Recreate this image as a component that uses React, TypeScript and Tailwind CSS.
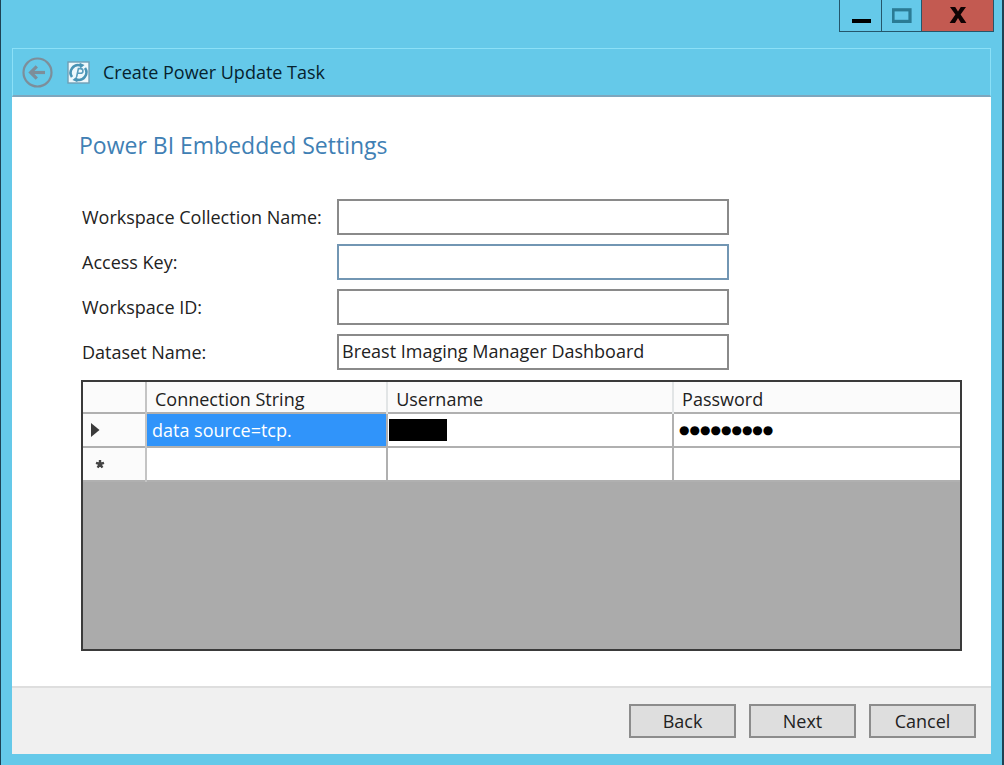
import React from "react";

type Field = { id: string; label: string; value: string; border: string };

const fields: Field[] = [
  { id: "collection", label: "Workspace Collection Name:", value: "", border: "border-[#8a8a8a]" },
  { id: "key", label: "Access Key:", value: "", border: "border-[#7296b3]" },
  { id: "workspace", label: "Workspace ID:", value: "", border: "border-[#8a8a8a]" },
  { id: "dataset", label: "Dataset Name:", value: "Breast Imaging Manager Dashboard", border: "border-[#8a8a8a]" },
];

function WindowControls() {
  return (
    <div className="mr-[7px] flex h-8 border-x border-b border-[#24566b]">
      <button aria-label="Minimize" className="flex w-[42px] items-center justify-center border-r border-[#24566b]">
        <svg width="20" height="20" viewBox="0 0 20 20">
          <rect x="1" y="13" width="19" height="4" fill="#000" />
        </svg>
      </button>
      <button aria-label="Maximize" className="flex w-10 items-center justify-center border-r border-[#24566b]">
        <svg width="20" height="16" viewBox="0 0 20 16">
          <rect x="1" y="1.8" width="17" height="11.6" fill="none" stroke="#2b7b94" strokeWidth="3.2" />
        </svg>
      </button>
      <button aria-label="Close" className="flex w-[71px] items-center justify-center bg-[#c35a51]">
        <svg width="18" height="18" viewBox="0 0 18 18">
          <path d="M1 0h5.2L9 4.6 11.8 0H17l-5.4 7.6L17.4 16H12L9 11 6 16H.6l5.8-8.4z" fill="#100304" />
        </svg>
      </button>
    </div>
  );
}

function BackArrow() {
  return (
    <svg width="31" height="31" viewBox="0 0 31 31" fill="none" stroke="#7d8e9a">
      <circle cx="15.5" cy="15.5" r="14" strokeWidth="2.2" />
      <path d="M8.5 15.5H23" strokeWidth="3.2" />
      <path d="M14.8 9.3l-6.2 6.2 6.2 6.2" strokeWidth="3.2" />
    </svg>
  );
}

function AppIcon() {
  return (
    <svg width="23" height="23" viewBox="0 0 23 23" fill="none">
      <rect x="1" y="1" width="21" height="21" fill="#eef8fc" stroke="#6f9fb5" strokeWidth="1.4" />
      <path d="M5 16A7.6 7.6 0 0 1 13.5 4.4" stroke="#4a94b5" strokeWidth="2.6" />
      <path d="M18 7A7.6 7.6 0 0 1 9.5 18.6" stroke="#4a94b5" strokeWidth="2.6" />
      <path d="M12.5 1.8l5 2.2-4.2 3.4zM10.5 21.2l-5-2.2 4.2-3.4z" fill="#4a94b5" />
      <path d="M9.6 16l1.8-8.4h2.2a2.3 2.3 0 0 1 0 4.7h-2.8" stroke="#5a9dbd" strokeWidth="1.6" />
    </svg>
  );
}

function ConnectionGrid() {
  return (
    <div className="min-h-[271px] flex-1 border-2 border-[#3a3a3a] bg-[#ababab]">
      <table className="w-full table-fixed border-collapse text-left">
        <colgroup>
          <col className="w-[63px]" />
          <col className="w-[27.5%]" />
          <col className="w-[32.6%]" />
          <col />
        </colgroup>
        <thead>
          <tr className="h-[31px] border-b-2 border-[#b0b0b0] bg-[#fbfbfb]">
            <th className="border-r-2 border-[#c4c4c4]" aria-label="Row" />
            <th className="border-r-2 border-[#e2e5e6] pt-1 pl-2 font-normal">Connection String</th>
            <th className="border-r-2 border-[#e2e5e6] pt-1 pl-2 font-normal">Username</th>
            <th className="pt-1 pl-2 font-normal">Password</th>
          </tr>
        </thead>
        <tbody>
          <tr className="h-[34px] border-b-2 border-[#b0b0b0] bg-white">
            <td className="border-r-2 border-[#c4c4c4] bg-[#fbfbfb] pl-2">
              <svg width="9" height="16" viewBox="0 0 9 16">
                <path d="M0 1l8.5 7L0 15z" fill="#3b3b3b" />
              </svg>
            </td>
            <td className="border-r-2 border-[#b0b0b0] bg-[#3094fa] pl-[5px] text-white">data source=tcp.</td>
            <td className="border-r-2 border-[#b0b0b0] pl-px">
              <span className="block h-[22px] w-[58px] bg-black" />
            </td>
            <td className="pl-[5px] font-['DejaVu_Sans',sans-serif] text-[12px] text-black">●●●●●●●●●</td>
          </tr>
          <tr className="h-[34px] border-b-2 border-[#b0b0b0] bg-white">
            <td className="border-r-2 border-[#c4c4c4] bg-[#fbfbfb] pl-3">
              <svg width="10" height="10" viewBox="0 0 10 10" stroke="#444" strokeWidth="2.4">
                <path d="M5 1V5M1 3.8L5 5M9 3.8L5 5M2.6 8.6L5 5M7.4 8.6L5 5" />
              </svg>
            </td>
            <td className="border-r-2 border-[#b0b0b0]" />
            <td className="border-r-2 border-[#b0b0b0]" />
            <td />
          </tr>
        </tbody>
      </table>
    </div>
  );
}

export default function App() {
  return (
    <div className="flex min-h-screen flex-col border-r-2 border-b-2 border-l border-[#1d4254] bg-[#65c9e9] px-[11px] pb-[11px] font-['Open_Sans','Noto_Sans',sans-serif] text-[18px] leading-6 text-[#222]">
      <div className="-mr-[10px] flex h-12 items-start justify-end">
        <WindowControls />
      </div>
      <header className="flex h-[49px] items-center border-t border-r border-l border-[#8be0f7] border-b-2 border-b-[#7ea6bd] pl-[9px] text-[#06222e]">
        <button aria-label="Go back">
          <BackArrow />
        </button>
        <span className="ml-[14px]">
          <AppIcon />
        </span>
        <span className="ml-[13px]">Create Power Update Task</span>
      </header>
      <main className="flex flex-1 flex-col bg-white pt-8 pr-[29px] pb-[35px] pl-[69px]">
        <h1 className="-ml-0.5 text-[23px] leading-8 text-[#3f80b4]">Power BI Embedded Settings</h1>
        <form className="mt-[38px] mb-[10px] flex flex-col gap-[9px]">
          {fields.map((f) => (
            <div key={f.id} className="flex items-center">
              <label htmlFor={f.id} className="w-[256px] shrink-0 pl-px">
                {f.label}
              </label>
              <input
                id={f.id}
                type="text"
                defaultValue={f.value}
                className={"h-9 w-[392px] border-2 bg-white px-[3px] pb-0.5 outline-none " + f.border}
              />
            </div>
          ))}
        </form>
        <ConnectionGrid />
      </main>
      <footer className="flex justify-end gap-[13px] border-t-2 border-[#dedede] bg-[#f0f0f0] pt-4 pr-[15px] pb-4">
        {["Back", "Next", "Cancel"].map((name) => (
          <button key={name} className="h-[34px] w-[107px] border-2 border-[#8c8c8c] bg-[#dedede]">
            {name}
          </button>
        ))}
      </footer>
    </div>
  );
}
